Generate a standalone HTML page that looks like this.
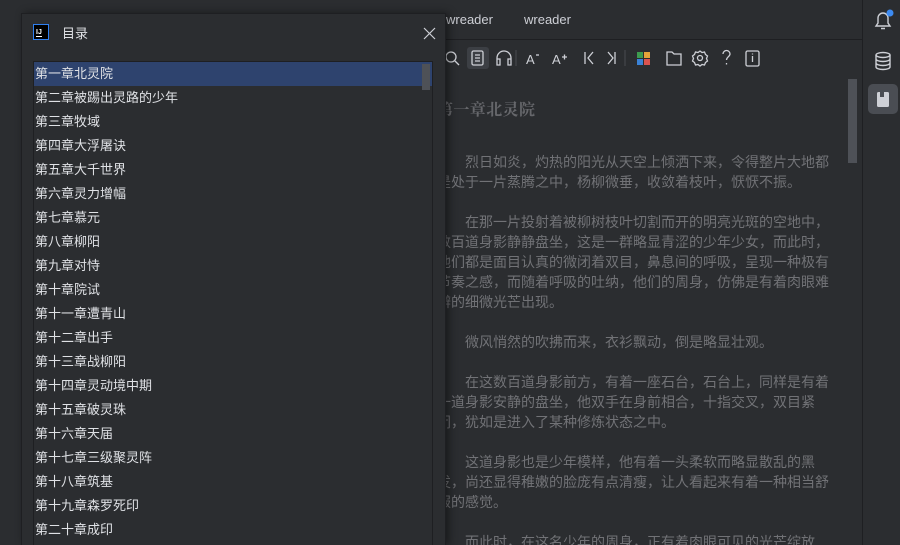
<!DOCTYPE html>
<html><head><meta charset="utf-8"><style>
*{margin:0;padding:0;box-sizing:border-box}
html{width:900px;height:545px;overflow:hidden}
body{width:900px;height:545px;overflow:hidden;background:#2b2d30;font-family:"Liberation Sans","Noto Sans CJK SC",sans-serif;position:relative}
.side{position:absolute;left:862px;top:0;width:38px;height:545px;background:#2b2d30;border-left:1px solid #1e1f22}
.tabs{position:absolute;left:430px;top:0;width:432px;height:40px;border-bottom:1px solid #1e1f22;background:#2b2d30}
.tab{position:absolute;top:12px;color:#ced0d6;font-size:13px}
.ul{position:absolute;left:512px;top:37px;width:76px;height:3px;background:#5a5d63;border-radius:2px}
.content{position:absolute;left:430px;top:70px;width:432px;height:475px;background:#2b2d30}
.txt{position:absolute;left:437px;top:0;font-size:14px;letter-spacing:0;color:#717276;white-space:nowrap}
.txt div{height:20px;line-height:20px}
.scroll{position:absolute;left:848px;top:79px;width:9px;height:84px;background:#4e5157}
.dlg{position:absolute;left:21px;top:13px;width:425px;height:532px;background:#2b2d30;border:1px solid #1e1f22;border-bottom:none;box-shadow:3px 0 8px rgba(0,0,0,.45);overflow:hidden}
.list{position:absolute;left:11px;top:47px;width:400px;height:500px;border:1px solid #1e1f22;background:#2b2d30}
.it{height:24px;line-height:24px;padding-left:1px;color:#dfe1e5;font-size:13px}
.sel{background:#2e436e}
</style></head><body>
<div class="tabs">
<div class="tab" style="left:16px">wreader</div>
<div class="tab" style="left:94px">wreader</div>
<div class="ul"></div>
</div>
<svg style="position:absolute;left:440px;top:44px" width="330" height="28" fill="none" stroke="#ced0d6" stroke-width="1.3">
<circle cx="11" cy="13" r="5"/><path d="M15 17l4 4"/>
<rect x="27" y="3" width="22" height="22" rx="3" fill="#3c3f44" stroke="none"/>
<rect x="32" y="7" width="11" height="14" rx="1.5"/><path d="M35 11h5M35 14h5M35 17h5"/>
<path d="M57 20v-6a7 7 0 0114 0v6M57 15h3v6h-3zM68 15h3v6h-3z"/>
<path d="M76 6v16" stroke="#43454a"/>
<text x="86" y="20" fill="#ced0d6" stroke="none" font-size="13" font-family="Liberation Sans">A</text><path d="M96 11h3"/>
<text x="112" y="20" fill="#ced0d6" stroke="none" font-size="13" font-family="Liberation Sans">A</text><path d="M122 13h5M124.5 10.5v5"/>
<path d="M145 8v12M153 8l-5 6 5 6M168 8l5 6-5 6M175 8v12"/>
<path d="M185 6v16" stroke="#43454a"/>
<rect x="197" y="8" width="6" height="6" fill="#3d9b4f" stroke="none"/><rect x="204" y="8" width="6" height="6" fill="#e5a43a" stroke="none"/>
<rect x="197" y="15" width="6" height="6" fill="#3a82d6" stroke="none"/><rect x="204" y="15" width="6" height="6" fill="#d9534f" stroke="none"/>
<path d="M227 8h5l2 2h7v11h-14z"/>
<circle cx="260" cy="14" r="2.5"/><path d="M260 7l2 1.5 2.5-.5 1 2.5 2 1.5-1 2.5 1 2.5-2 1.5-1 2.5-2.5-.5-2 1.5-2-1.5-2.5.5-1-2.5-2-1.5 1-2.5-1-2.5 2-1.5 1-2.5 2.5.5z"/>
<path d="M283 10a3.5 3.5 0 117 0c0 2.5-3.5 3-3.5 6M286.5 19v1.5"/>
<rect x="306" y="7" width="13" height="15" rx="1.5"/><path d="M312.5 12v6M312.5 9.5v1"/>
</svg>
<div class="content"></div>
<div class="txt" style="top:97px;font-family:'Liberation Serif','Noto Serif CJK SC',serif;font-weight:bold;font-size:16px;color:#66676b;letter-spacing:0.4px">第一章北灵院</div>
<div class="txt" style="top:152px">
<div>　　烈日如炎，灼热的阳光从天空上倾洒下来，令得整片大地都</div>
<div>是处于一片蒸腾之中，杨柳微垂，收敛着枝叶，恹恹不振。</div>
<div>&nbsp;</div>
<div>　　在那一片投射着被柳树枝叶切割而开的明亮光斑的空地中，</div>
<div>数百道身影静静盘坐，这是一群略显青涩的少年少女，而此时，</div>
<div>他们都是面目认真的微闭着双目，鼻息间的呼吸，呈现一种极有</div>
<div>节奏之感，而随着呼吸的吐纳，他们的周身，仿佛是有着肉眼难</div>
<div>辨的细微光芒出现。</div>
<div>&nbsp;</div>
<div>　　微风悄然的吹拂而来，衣衫飘动，倒是略显壮观。</div>
<div>&nbsp;</div>
<div>　　在这数百道身影前方，有着一座石台，石台上，同样是有着</div>
<div>一道身影安静的盘坐，他双手在身前相合，十指交叉，双目紧</div>
<div>闭，犹如是进入了某种修炼状态之中。</div>
<div>&nbsp;</div>
<div>　　这道身影也是少年模样，他有着一头柔软而略显散乱的黑</div>
<div>发，尚还显得稚嫩的脸庞有点清瘦，让人看起来有着一种相当舒</div>
<div>服的感觉。</div>
<div>&nbsp;</div>
<div>　　而此时，在这名少年的周身，正有着肉眼可见的光芒绽放</div>
</div>
<div class="scroll"></div>
<div class="side">
<svg width="38" height="120" fill="none" stroke="#ced0d6" stroke-width="1.4">
<path d="M13 26h14l-2-3v-5a5 5 0 00-10 0v5zM18 28.5h4"/>
<circle cx="27" cy="13" r="3.5" fill="#3d8bf2" stroke="none"/>
<ellipse cx="20" cy="55" rx="7" ry="2.5"/><path d="M13 55v12c0 1.4 3 2.5 7 2.5s7-1.1 7-2.5V55M13 59c0 1.4 3 2.5 7 2.5s7-1.1 7-2.5M13 63c0 1.4 3 2.5 7 2.5s7-1.1 7-2.5"/>
<rect x="5" y="84" width="30" height="30" rx="5" fill="#4a4d53" stroke="none"/>
<rect x="14" y="92" width="12" height="15" rx="1.5" fill="#ced0d6" stroke="none"/>
<rect x="17" y="92" width="4" height="5" fill="#4a4d53" stroke="none"/>
</svg>
</div>
<div class="dlg">
<svg style="position:absolute;left:11px;top:10px" width="17" height="17"><rect x="0.5" y="0.5" width="15" height="15" fill="#000" stroke="#2f7ff0"/><text x="3" y="10" fill="#fff" font-size="7" font-weight="bold" font-family="Liberation Sans">IJ</text><rect x="3" y="12" width="6" height="1" fill="#fff"/></svg>
<div style="position:absolute;left:40px;top:9px;color:#dfe1e5;font-size:13px">目录</div>
<svg style="position:absolute;left:401px;top:13px" width="13" height="13" stroke="#ced0d6" stroke-width="1.2"><path d="M1 1l11 11M12 1L1 12"/></svg>
<div class="list">
<div class="it sel">第一章北灵院</div>
<div class="it">第二章被踢出灵路的少年</div>
<div class="it">第三章牧域</div>
<div class="it">第四章大浮屠诀</div>
<div class="it">第五章大千世界</div>
<div class="it">第六章灵力增幅</div>
<div class="it">第七章慕元</div>
<div class="it">第八章柳阳</div>
<div class="it">第九章对恃</div>
<div class="it">第十章院试</div>
<div class="it">第十一章遭青山</div>
<div class="it">第十二章出手</div>
<div class="it">第十三章战柳阳</div>
<div class="it">第十四章灵动境中期</div>
<div class="it">第十五章破灵珠</div>
<div class="it">第十六章天届</div>
<div class="it">第十七章三级聚灵阵</div>
<div class="it">第十八章筑基</div>
<div class="it">第十九章森罗死印</div>
<div class="it">第二十章成印</div>
<div style="position:absolute;right:2px;top:2px;width:8px;height:26px;background:#4e5157"></div>
</div>
</div>
</body></html>
